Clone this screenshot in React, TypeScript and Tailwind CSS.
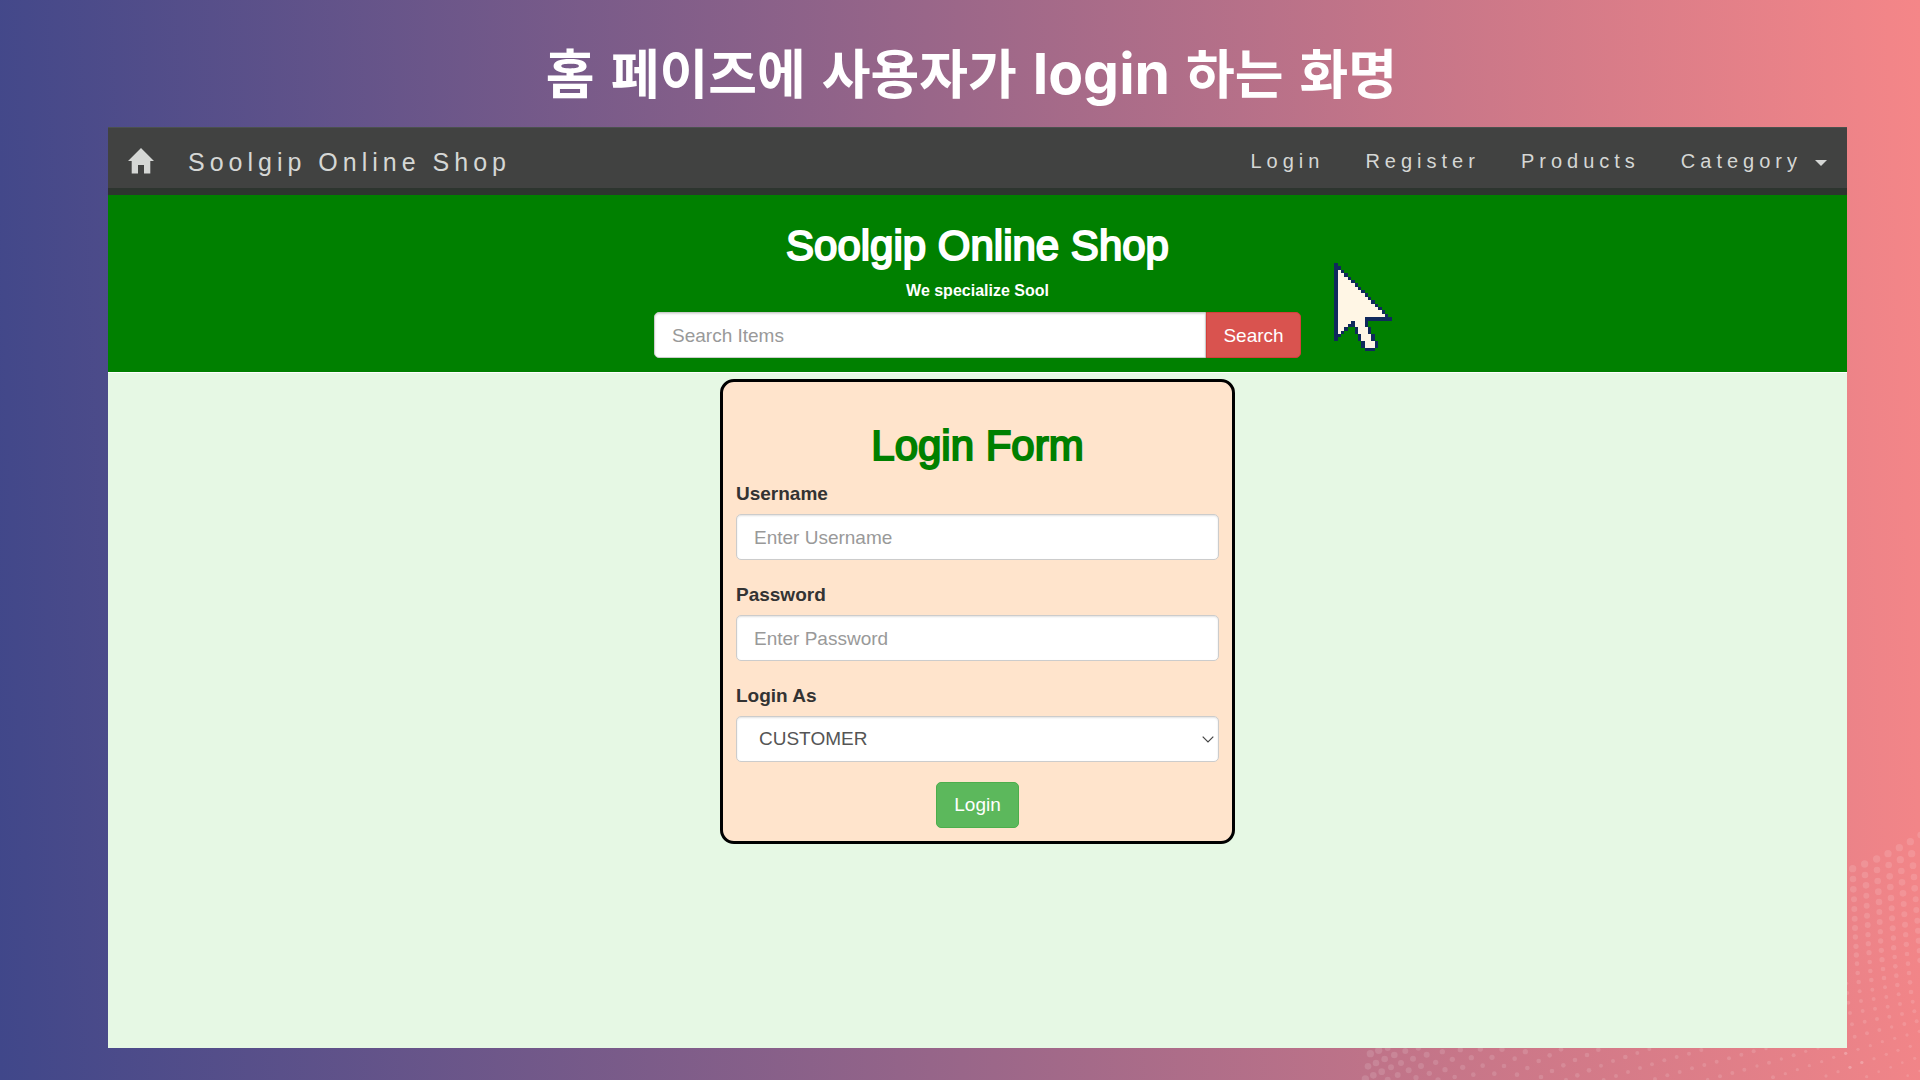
import React from "react";

type Dot = [number, number, number];

// Halftone dots, in thirds of a pixel, measured from the corner of each patch.
const RIGHT_DOTS: Dot[] = [
  [38, 146, 11], [39, 177, 10], [40, 208, 10], [42, 238, 9], [43, 267, 9], [44, 296, 9], [45, 324, 9], [46, 351, 8], [48, 379, 8], [49, 405, 8], [51, 431, 7], [53, 459, 7], [56, 486, 7], [59, 514, 6], [63, 543, 6], [68, 573, 6], [74, 605, 6], [81, 640, 6], [91, 677, 5], [102, 716, 5], [116, 755, 4],
  [74, 132, 11], [75, 165, 10], [78, 196, 10], [79, 227, 9], [80, 257, 9], [81, 287, 9], [83, 315, 9], [84, 344, 8], [85, 371, 8], [87, 398, 8], [89, 426, 7], [91, 453, 7], [94, 480, 7], [97, 509, 6], [101, 537, 6], [105, 566, 6], [111, 597, 6], [118, 630, 6], [127, 665, 5], [139, 703, 5], [152, 742, 4],
  [110, 117, 11], [111, 150, 10], [113, 183, 10], [115, 215, 10], [117, 246, 10], [118, 276, 9], [119, 306, 9], [121, 335, 8], [122, 363, 8], [124, 391, 8], [126, 419, 8], [129, 447, 7], [132, 474, 7], [135, 502, 6], [139, 531, 6], [143, 560, 6], [148, 590, 6], [155, 621, 5], [164, 655, 5], [174, 691, 5], [187, 728, 4], [203, 767, 4],
  [144, 101, 11], [146, 135, 10], [149, 169, 10], [151, 201, 10], [153, 234, 10], [155, 265, 9], [156, 295, 9], [158, 325, 9], [160, 354, 8], [161, 383, 8], [164, 411, 7], [166, 439, 7], [169, 467, 7], [172, 495, 7], [176, 523, 6], [180, 552, 6], [186, 582, 6], [193, 612, 6], [201, 645, 5], [211, 679, 5], [224, 715, 5], [239, 753, 4],
  [178, 83, 11], [181, 119, 11], [184, 153, 10], [186, 187, 10], [189, 220, 10], [191, 252, 9], [193, 283, 9], [195, 314, 9], [197, 344, 8], [199, 373, 8], [201, 402, 7], [204, 431, 7], [207, 459, 7], [210, 487, 7], [213, 516, 7], [218, 545, 6], [223, 574, 6], [230, 604, 6], [238, 634, 5],
  [211, 65, 11], [215, 101, 11], [219, 137, 10], [222, 171, 10], [224, 205, 10], [227, 238, 9], [229, 270, 9], [232, 302, 9], [234, 332, 9], [236, 362, 9], [238, 392, 8], [240, 421, 8],
  [242, 45, 10], [20, 490, 5], [22, 519, 6], [25, 548, 6], [30, 579, 6], [36, 613, 6], [44, 650, 6], [54, 688, 5], [66, 727, 5], [80, 770, 5], [17, 700, 5], [30, 742, 5],
];

const BOTTOM_DOTS: Dot[] = [
  [6, 28, 8], [12, 78, 7], [44, 56, 7], [51, 104, 7], [76, 35, 8], [82, 84, 7], [116, 63, 7], [123, 111, 7], [149, 46, 7], [156, 93, 7], [183, 28, 7], [190, 76, 7], [225, 60, 7], [198, 119, 6], [232, 106, 7], [261, 45, 7], [267, 91, 7], [295, 29, 7], [303, 77, 6], [311, 120, 6], [339, 63, 6], [348, 108, 6], [376, 51, 7], [384, 96, 6], [412, 39, 6], [420, 84, 6], [448, 27, 6], [456, 73, 6], [465, 117, 6], [493, 61, 6], [502, 106, 6], [530, 51, 6], [539, 96, 6], [567, 41, 6], [576, 85, 6], [604, 30, 6], [613, 75, 6], [623, 118, 5], [650, 65, 6], [660, 109, 6], [687, 55, 6], [697, 99, 6], [724, 44, 6], [733, 89, 6], [761, 34, 6], [771, 78, 5], [798, 26, 5], [807, 68, 6], [819, 112, 6], [844, 57, 5], [856, 101, 5], [881, 46, 6], [892, 89, 5], [917, 34, 5], [928, 77, 5], [965, 65, 5], [954, 24, 5], [978, 108, 5], [1001, 52, 5], [1014, 95, 5], [1037, 40, 5], [1050, 82, 5], [1085, 68, 5],
];

const LEFT_DOTS: Dot[] = [
  [91, 71, 11], [116, 61, 11], [143, 54, 9], [84, 109, 10], [108, 99, 10], [134, 87, 10], [163, 75, 10], [196, 63, 9], [235, 54, 8], [76, 147, 11], [100, 136, 10], [125, 125, 10], [153, 112, 9], [183, 99, 9], [219, 86, 9], [260, 74, 9], [307, 65, 8], [361, 59, 8], [421, 57, 8], [143, 149, 9], [173, 135, 9], [206, 121, 9], [243, 108, 9], [287, 97, 8], [337, 88, 8], [394, 83, 8], [456, 82, 8], [228, 143, 8], [268, 130, 8], [315, 119, 8], [368, 112, 8], [428, 107, 7], [294, 150, 8], [344, 141, 7], [400, 134, 7], [463, 131, 7],
];

function Halftone() {
  const draw = (dots: Dot[]) =>
    dots.map(([x, y, r]) => <circle key={`${x}-${y}`} cx={x} cy={y} r={r} />);
  return (
    <svg
      className="pointer-events-none absolute right-0 bottom-0 h-[260px] w-[580px]"
      viewBox="0 0 1740 780"
      fill="#ffffff"
      fillOpacity={0.13}
      aria-hidden="true"
    >
      <g transform="translate(1500 0)">{draw(RIGHT_DOTS)}</g>
      <g transform="translate(480 660)">{draw(BOTTOM_DOTS)}</g>
      <g transform="translate(0 630)">{draw(LEFT_DOTS)}</g>
    </svg>
  );
}

// Pixel-art pointer: [row, first column, last column]
const POINTER_FILL: [number, number, number][] = [
  ...Array.from({ length: 14 }, (_, i): [number, number, number] => [i + 2, 1, i + 1]),
  [16, 1, 8], [17, 1, 4], [17, 6, 8], [18, 1, 3], [18, 6, 8], [19, 1, 2], [19, 7, 9],
  [20, 1, 1], [20, 7, 9], [21, 8, 10], [22, 8, 10], [23, 9, 11], [24, 9, 11],
];
const POINTER_EDGE: [number, number, number][] = [
  ...Array.from({ length: 23 }, (_, i): [number, number, number] => [i, 0, 0]),
  ...Array.from({ length: 15 }, (_, i): [number, number, number] => [i + 1, i + 1, i + 1]),
  [16, 9, 16], [17, 5, 5], [17, 9, 9], [18, 4, 5], [18, 9, 9], [19, 3, 3], [19, 6, 6], [19, 10, 10],
  [20, 2, 2], [20, 6, 6], [20, 10, 10], [21, 1, 1], [21, 7, 7], [21, 11, 11], [22, 7, 7], [22, 11, 11],
  [23, 8, 8], [23, 12, 12], [24, 8, 8], [24, 12, 12], [25, 9, 11],
];

function Pointer() {
  const draw = (cells: [number, number, number][]) =>
    cells.map(([r, a, b]) => <rect key={`${r}-${a}`} x={a} y={r} width={b - a + 1} height={1} />);
  return (
    <svg
      className="pointer-events-none absolute top-[68px] left-[calc(50%+356px)] h-[88px] w-[58px]"
      viewBox="0 0 17 26"
      shapeRendering="crispEdges"
      aria-hidden="true"
    >
      <g fill="#fff6e5">{draw(POINTER_FILL)}</g>
      <g fill="#10295c">{draw(POINTER_EDGE)}</g>
    </svg>
  );
}

function Field({ id, label, children }: { id: string; label: string; children: React.ReactNode }) {
  return (
    <div className="mb-5">
      <label htmlFor={id} className="mb-1.5 block pt-px leading-7 font-bold text-[#333333]">
        {label}
      </label>
      {children}
    </div>
  );
}

const NAV = ["Login", "Register", "Products"];

export default function App() {
  return (
    <div className="relative flex min-h-screen flex-col bg-[linear-gradient(88deg,#40478a,#f58688)] pr-[73px] pb-8 pl-[108px] font-['Liberation_Sans',Arial,sans-serif] text-[19px]">
      <Halftone />
      <h1 className="flex h-[127px] items-center justify-center pt-4 pr-3 text-white">
        <span className="flex items-baseline gap-4 font-['Noto_Sans_CJK_KR',sans-serif] text-[53px] font-bold">
          <span>홈</span> <span>페이즈에</span> <span>사용자가</span>{" "}
          <span className="font-['Inter',sans-serif] text-[57px] leading-none">login</span>{" "}
          <span>하는</span> <span>화명</span>
        </span>
      </h1>

      <main className="relative flex grow flex-col bg-[#e6f8e4]">
        <nav className="flex h-[68px] items-center justify-between border-t border-b-[7px] border-t-[#4b514e] border-b-[#2d352f] bg-[#414241] px-5 text-[#d5d7d5]">
          <div className="flex items-center">
            <a href="#home" aria-label="Home">
              <svg className="mt-1.5 h-[26px] w-[26px]" viewBox="0 0 26 26" fill="currentColor">
                <path d="M13 0 L26 13 H22.3 V25.5 H16 V17 H10 V25.5 H3.7 V13 H0 Z" />
              </svg>
            </a>
            <a href="#home" className="mt-2.5 ml-[34px] text-[25px] tracking-[5px]">Soolgip Online Shop</a>
          </div>
          <div className="mt-1.5 flex gap-[41px] text-xl tracking-[5px]">
            {NAV.map((item) => (
              <a key={item} href={`#${item.toLowerCase()}`}>{item}</a>
            ))}
            <button type="button" className="flex items-center gap-[13px] tracking-[5px]">
              Category
              <svg className="mt-1 h-1.5 w-3" viewBox="0 0 12 6" fill="currentColor" aria-hidden="true">
                <path d="M0 0H12L6 6Z" />
              </svg>
            </button>
          </div>
        </nav>

        <header className="relative flex h-[178px] flex-col items-center border-b border-b-white bg-[#008000] text-white">
          <h2 className="mt-7 text-[42px] leading-[46px] [-webkit-text-stroke:2px_white]">Soolgip Online Shop</h2>
          <p className="mt-3 text-base leading-5 font-bold">We specialize Sool</p>
          <form className="mt-[11px] flex h-[46px] w-[647px] text-[19px]" onSubmit={(e) => e.preventDefault()}>
            <input
              type="text"
              aria-label="Search Items"
              placeholder="Search Items"
              className="min-w-0 grow rounded-l-[5px] border border-[#cccccc] bg-white px-[17px] pt-0.5 text-[#555555] shadow-[inset_0_1px_2px_rgba(0,0,0,0.15)] placeholder:text-[#999999]"
            />
            <button type="submit" className="w-[95px] rounded-r-[5px] border border-[#d43f3a] bg-[#d9534f] pt-0.5">Search</button>
          </form>
          <div className="absolute inset-0 pointer-events-none">
            <Pointer />
          </div>
        </header>

        <form
          className="mx-auto mt-1.5 flex w-[515px] flex-col rounded-[14px] border-3 border-black bg-[#ffe4cc] px-[13px] pt-[41px] pb-[13px]"
          onSubmit={(e) => e.preventDefault()}
        >
          <h3 className="mb-[10px] text-center text-[42px] leading-[46px] text-[#008000] [-webkit-text-stroke:2px_#008000]">Login Form</h3>
          <Field id="username" label="Username">
            <input
              id="username"
              type="text"
              placeholder="Enter Username"
              className="h-[46px] w-full rounded-[5px] border border-[#cccccc] bg-white px-[17px] pt-0.5 shadow-[inset_0_1px_2px_rgba(0,0,0,0.12)] placeholder:text-[#999999]"
            />
          </Field>
          <Field id="password" label="Password">
            <input
              id="password"
              type="password"
              placeholder="Enter Password"
              className="h-[46px] w-full rounded-[5px] border border-[#cccccc] bg-white px-[17px] pt-0.5 shadow-[inset_0_1px_2px_rgba(0,0,0,0.12)] placeholder:text-[#999999]"
            />
          </Field>
          <Field id="role" label="Login As">
            <div className="relative">
              <select
                id="role"
                className="h-[46px] w-full appearance-none rounded-[5px] border border-[#cccccc] bg-white px-[22px] text-[#555555] shadow-[inset_0_1px_2px_rgba(0,0,0,0.12)]"
              >
                <option>CUSTOMER</option>
                <option>ADMIN</option>
              </select>
              <svg
                className="pointer-events-none absolute top-5 right-[5px] h-[7px] w-3"
                viewBox="0 0 12 7"
                fill="none"
                stroke="#444444"
                strokeWidth="1.2"
                aria-hidden="true"
              >
                <path d="M0.7 0.7 L6 6 L11.3 0.7" />
              </svg>
            </div>
          </Field>
          <button type="submit" className="h-[46px] w-[83px] self-center rounded-[5px] border border-[#4cae4c] bg-[#5cb85c] text-white">
            Login
          </button>
        </form>
      </main>
    </div>
  );
}
